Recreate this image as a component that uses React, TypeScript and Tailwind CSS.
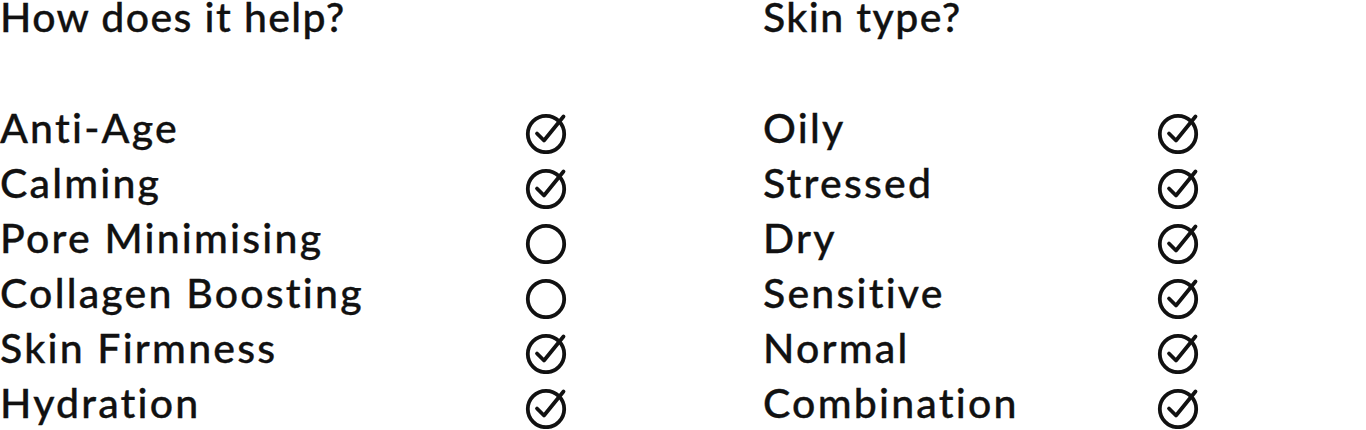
const HELPS = [
  { label: "Anti-Age", on: true },
  { label: "Calming", on: true },
  { label: "Pore Minimising", on: false },
  { label: "Collagen Boosting", on: false },
  { label: "Skin Firmness", on: true },
  { label: "Hydration", on: true },
];

const SKINS = [
  { label: "Oily", on: true },
  { label: "Stressed", on: true },
  { label: "Dry", on: true },
  { label: "Sensitive", on: true },
  { label: "Normal", on: true },
  { label: "Combination", on: true },
];

function Mark({ on }: { on: boolean }) {
  return (
    <svg
      width="42"
      height="42"
      viewBox="0 0 42 42"
      fill="none"
      stroke="#111"
      strokeWidth="3.8"
      strokeLinecap="round"
      strokeLinejoin="round"
      className="-ml-[1px] mt-[10px]"
    >
      <circle cx="21" cy="22" r="18.2" />
      {on ? <path d="M12 21.5 L19 28.5 L38.5 4.5" /> : null}
    </svg>
  );
}

function Column({
  title,
  items,
  textWidth,
  className,
}: {
  title: string;
  items: { label: string; on: boolean }[];
  textWidth: string;
  className?: string;
}) {
  return (
    <section className={className}>
      <h2 className="-mt-[7px] text-[41px] leading-[48px] font-medium tracking-[1.4px]">
        {title}
      </h2>
      <ul className="mt-[59px]">
        {items.map((item) => (
          <li key={item.label} className="flex h-[55px] items-center">
            <span
              className={`${textWidth} text-[41px] leading-[55px] font-medium tracking-[2.2px]`}
            >
              {item.label}
            </span>
            <Mark on={item.on} />
          </li>
        ))}
      </ul>
    </section>
  );
}

export default function App() {
  return (
    <main
      className="flex h-[430px] w-[1366px] overflow-hidden bg-white text-[#111] [font-variant-ligatures:none] [-webkit-text-stroke:0.35px_#111]"
      style={{ fontFamily: "Lato, 'Open Sans', sans-serif" }}
    >
      <Column
        title="How does it help?"
        items={HELPS}
        textWidth="w-[526px]"
        className="w-[763px] shrink-0"
      />
      <Column title="Skin type?" items={SKINS} textWidth="w-[395px]" />
    </main>
  );
}
